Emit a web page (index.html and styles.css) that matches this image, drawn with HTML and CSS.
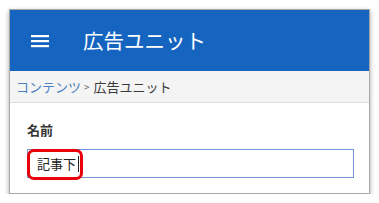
FILE: index.html
```html
<!DOCTYPE html>
<html lang="ja">
<head>
<meta charset="utf-8">
<link rel="stylesheet" href="styles.css">
</head>
<body>
<div class="card">
  <header class="appbar">
    <svg class="menu" width="18" height="14" viewBox="0 0 18 14">
      <rect x="0" y="1" width="18" height="2.2" fill="#fff"/>
      <rect x="0" y="6" width="18" height="2.2" fill="#fff"/>
      <rect x="0" y="11" width="18" height="2.2" fill="#fff"/>
    </svg>
    <h1 class="title">広告ユニット</h1>
  </header>
  <nav class="crumbs">
    <span class="link">コンテンツ</span><span class="sep">&gt;</span><span class="here">広告ユニット</span>
  </nav>
  <section class="form">
    <label class="label">名前</label>
    <div class="field">
      <span class="value">記事下</span><span class="caret"></span>
      <span class="mark"></span>
    </div>
  </section>
</div>
</body>
</html>
```
FILE: styles.css
```css
html, body {
  margin: 0;
  padding: 0;
  background: #fff;
}
body {
  font-family: "Noto Sans CJK JP", "Noto Sans", sans-serif;
  padding: 9px 0 0 9px;
}
.card {
  box-sizing: border-box;
  width: 361px;
  height: 185px;
  border: 1px solid #a8a8a8;
  box-shadow: 0 2px 5px rgba(0,0,0,0.35);
  display: flex;
  flex-direction: column;
  background: #fff;
}
.appbar {
  height: 61px;
  background: #1565c0;
  display: flex;
  align-items: center;
  padding-left: 21px;
  flex-shrink: 0;
}
.menu {
  display: block;
  margin-top: 1px;
}
.title {
  margin: 0 0 0 34px;
  color: #fff;
  font-size: 20.5px;
  font-weight: 400;
  line-height: 1;
}
.crumbs {
  height: 31px;
  background: #f4f4f4;
  border-bottom: 1px solid #dcdcdc;
  display: flex;
  align-items: center;
  padding-left: 6px;
  font-size: 13px;
  flex-shrink: 0;
}
.link { color: #4a7fc1; }
.sep { color: #666; font-size: 10px; margin: 0 4px 0 3px; }
.here { color: #3a3a3a; }
.form {
  padding: 18px 0 0 17px;
  display: flex;
  flex-direction: column;
}
.label {
  font-size: 13px;
  font-weight: 700;
  color: #333;
  line-height: 17px;
}
.field {
  position: relative;
  margin-top: 11px;
  box-sizing: border-box;
  width: 327px;
  height: 29px;
  border: 1px solid #6f98d4;
  display: flex;
  align-items: center;
  padding-left: 9px;
}
.value {
  font-size: 13px;
  color: #222;
}
.caret {
  width: 1px;
  height: 16px;
  background: #222;
  margin-left: 2px;
}
.mark {
  position: absolute;
  left: -1px;
  top: -1px;
  width: 56px;
  height: 31px;
  box-sizing: border-box;
  border: 3px solid #e8000b;
  border-radius: 7px;
}
```
